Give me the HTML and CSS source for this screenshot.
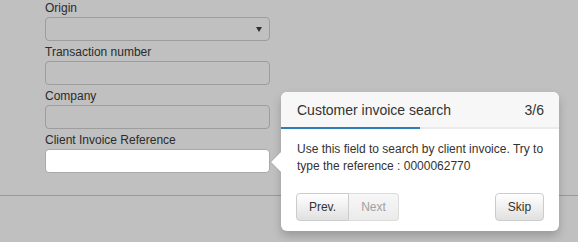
FILE: index.html
```html
<!DOCTYPE html>
<html>
<head>
	<title>Client invoice search</title>
	<link rel="stylesheet" href="styles.css">
</head>
<body>
	<form class="search_form">
		<div class="field">
			<label for="origin">Origin</label>
			<div id="origin" class="select"></div>
		</div>
		<div class="field">
			<label for="transaction">Transaction number</label>
			<input id="transaction" class="text" type="text">
		</div>
		<div class="field">
			<label for="company">Company</label>
			<input id="company" class="text" type="text">
		</div>
		<div class="field">
			<label for="reference">Client Invoice Reference</label>
			<input id="reference" class="text highlighted" type="text">
		</div>
	</form>
	<hr class="separator">

	<div class="tour_popover">
		<div class="arrow"></div>
		<div class="tour_title">
			<span>Customer invoice search</span>
			<span class="tour_step">3/6</span>
		</div>
		<div class="tour_progress"><div class="tour_bar" style="width: 50%"></div></div>
		<div class="tour_content">Use this field to search by client invoice. Try to type the reference : 0000062770</div>
		<div class="tour_nav">
			<div class="btn_group">
				<button class="btn" type="button">Prev.</button>
				<button class="btn" type="button" disabled>Next</button>
			</div>
			<button class="btn" type="button">Skip</button>
		</div>
	</div>
</body>
</html>
```
FILE: styles.css
```css
/* Page */

html, body { margin: 0; padding: 0; }
body { background: #c0c0c0; font-family: "Liberation Sans", Arial, sans-serif; font-size: 12px; color: #333; }

.search_form { width: 225px; padding: 1px 0 0 45px; }
.field { margin-top: 4px; }
.field:first-child { margin-top: 0; }
.field label { display: block; line-height: 14px; margin-bottom: 2px; color: #2b2b2b; }

.text, .select { box-sizing: border-box; display: block; width: 225px; height: 24px; margin: 0; border: 1px solid #9d9d9d; border-radius: 4px; background: #c0c0c0; font: inherit; }
.select { display: flex; align-items: center; justify-content: flex-end; padding-right: 7px; }
.select::after { content: ""; border-left: 3px solid transparent; border-right: 3px solid transparent; border-top: 5px solid #303030; }
.text.highlighted { background: #fff; border-color: #a9a9a9; }

.separator { margin: 22px 0 0; border: 0; border-top: 1px solid #9a9a9a; }

/* Tour popover */

.tour_popover { position: absolute; left: 281px; top: 92px; width: 278px; height: 139px; box-sizing: border-box; background: #fff; border-radius: 6px; box-shadow: 0 5px 10px rgba(0,0,0,.2); }
.arrow { position: absolute; left: -11px; top: 50%; margin-top: -11px; width: 0; height: 0; border: 11px solid transparent; border-left: 0; border-right-color: #a6a6a6; }
.arrow::after { content: ""; position: absolute; left: 1px; top: -10px; border: 10px solid transparent; border-left: 0; border-right-color: #fff; }

.tour_title { display: flex; justify-content: space-between; height: 35px; padding: 0 15px 0 16px; align-items: center; background: #f7f7f7; border-radius: 6px 6px 0 0; font-size: 14px; color: #333; }
.tour_progress { height: 2px; background: #ebebeb; }
.tour_bar { height: 2px; background: #2d7db6; }

.tour_content { padding: 12px 15px 0 16px; line-height: 17px; color: #333; }

.tour_nav { display: flex; justify-content: space-between; padding: 0 15px 0 15px; margin-top: 18px; }
.btn_group { display: flex; }
.btn { height: 28px; padding: 0 11px; border: 1px solid #ccc; border-radius: 4px; background: linear-gradient(#fff, #e0e0e0); font: inherit; font-size: 12px; color: #333; }
.btn_group .btn:first-child { border-radius: 4px 0 0 4px; width: 53px; }
.btn_group .btn:last-child { border-radius: 0 4px 4px 0; border-left: 0; width: 50px; }
.btn:disabled { color: #a0a0a0; background: linear-gradient(#f7f7f7, #ebebeb); border-color: #dcdcdc; }
.tour_nav > .btn { width: 49px; }
```
